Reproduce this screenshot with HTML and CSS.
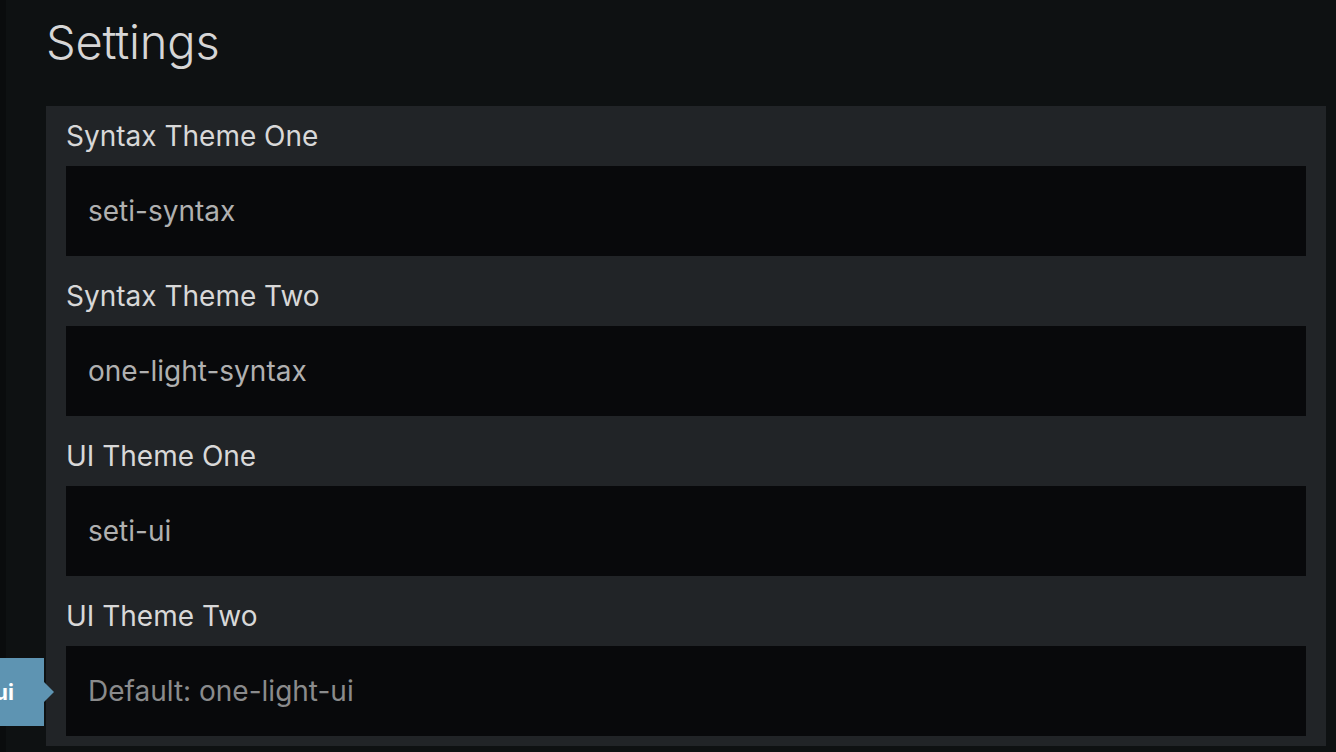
FILE: index.html
```html
<!DOCTYPE html>
<html>
<head>
<meta charset="utf-8">
<link rel="stylesheet" href="styles.css">
</head>
<body>
<div class="app">
  <div class="edge"></div>
  <main class="content">
    <h1 class="title">Settings</h1>
    <section class="panel">
      <div class="field">
        <label class="label">Syntax Theme One</label>
        <div class="input">seti-syntax</div>
      </div>
      <div class="field">
        <label class="label">Syntax Theme Two</label>
        <div class="input">one-light-syntax</div>
      </div>
      <div class="field">
        <label class="label">UI Theme One</label>
        <div class="input">seti-ui</div>
      </div>
      <div class="field">
        <label class="label">UI Theme Two</label>
        <div class="input placeholder">Default: one-light-ui</div>
      </div>
    </section>
  </main>
  <div class="tooltip">one-light-ui</div>
</div>
</body>
</html>
```
FILE: styles.css
```css
html, body {
  margin: 0;
  padding: 0;
  background: #0e1112;
  height: 100%;
  overflow: hidden;
}
.app {
  display: flex;
  height: 752px;
  position: relative;
  font-family: Inter, "Noto Sans", sans-serif;
}
.edge {
  width: 6px;
  background: #0a0c0d;
  flex: none;
}
.content {
  flex: 1;
  padding: 0 10px 0 40px;
}
.title {
  margin: 0;
  height: 106px;
  font-size: 47px;
  font-weight: 300;
  color: #d6d6d6;
  line-height: 84px;
  letter-spacing: -0.2px;
}
.panel {
  background: #212427;
  padding: 0 20px 10px;
  display: flex;
  flex-direction: column;
  gap: 10px;
}
.field {
  display: flex;
  flex-direction: column;
}
.label {
  height: 60px;
  line-height: 60px;
  font-size: 28px;
  color: #d8d8d8;
}
.input {
  height: 90px;
  line-height: 90px;
  background: #08090b;
  padding: 0 22px;
  font-size: 28px;
  color: #b0b0b0;
}
.input.placeholder {
  color: #8a8b8c;
}
.tooltip {
  position: absolute;
  right: calc(100% - 44px);
  top: 658px;
  height: 68px;
  line-height: 68px;
  background: #5e94b2;
  color: #ffffff;
  font-weight: 700;
  font-size: 22px;
  padding: 0 30px 0 20px;
  white-space: nowrap;
}
.tooltip::after {
  content: "";
  position: absolute;
  left: 100%;
  top: 24px;
  border-style: solid;
  border-width: 10px 0 10px 10px;
  border-color: transparent transparent transparent #5e94b2;
}
```
